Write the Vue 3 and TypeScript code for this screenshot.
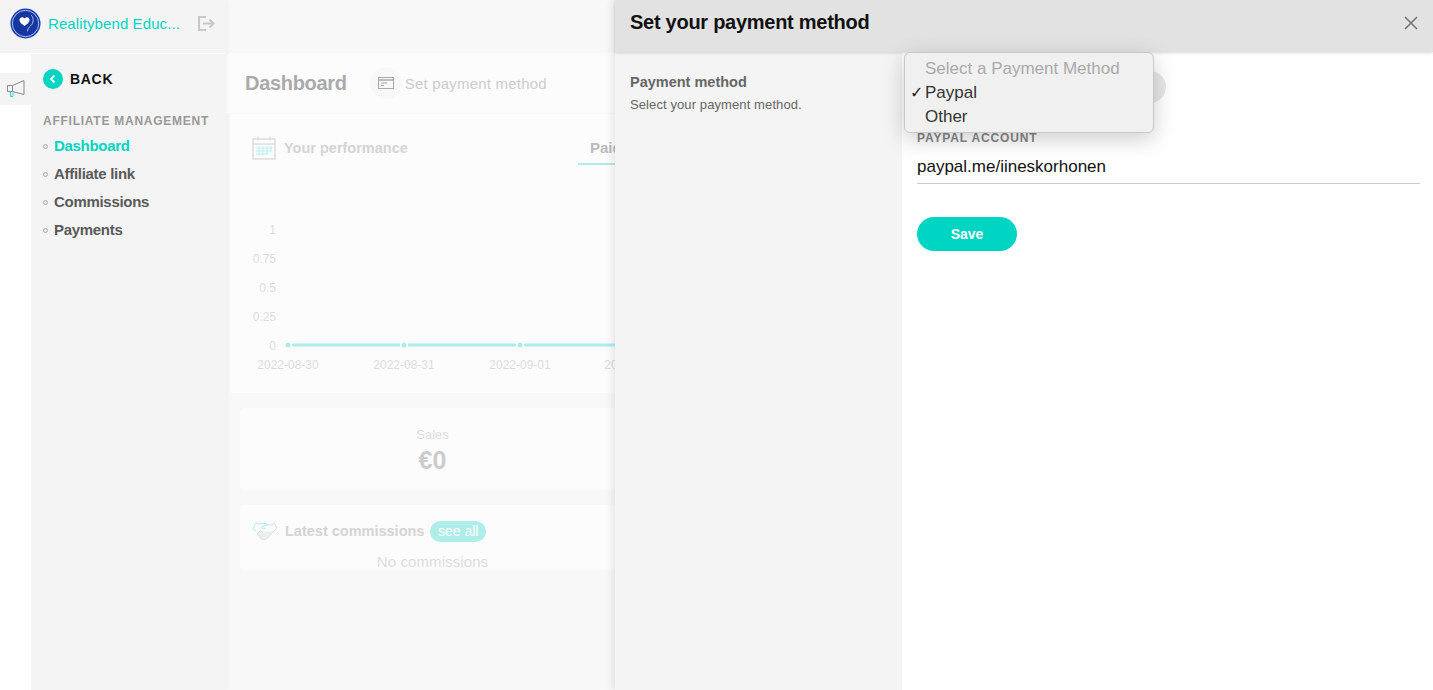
<script setup lang="ts">
const menu = [
  { label: 'Dashboard', active: true },
  { label: 'Affiliate link', active: false },
  { label: 'Commissions', active: false },
  { label: 'Payments', active: false },
]

const yTicks = ['1', '0.75', '0.5', '0.25', '0']

const xTicks = [
  { x: 58, label: '2022-08-30' },
  { x: 174, label: '2022-08-31' },
  { x: 290, label: '2022-09-01' },
  { x: 405, label: '2022-09-02' },
]

const options = [
  { label: 'Select a Payment Method', muted: true, checked: false },
  { label: 'Paypal', muted: false, checked: true },
  { label: 'Other', muted: false, checked: false },
]
</script>

<template>
  <div class="app">
    <aside class="sidebar">
      <div class="brand">
        <svg class="logo" viewBox="0 0 32 32" width="31" height="31">
          <circle cx="16" cy="16" r="15.5" fill="#1b3fb2" />
          <circle cx="16" cy="16" r="13.600" fill="none" stroke="#c5d2f2" stroke-width="0.900" />
          <circle cx="16" cy="16" r="12.400" fill="#15379f" />
          <path d="M15 18.500c-2.800-1.800-5.200-3.500-5.200-6.100 0-1.700 1.300-2.900 2.800-2.900 1 0 1.900.6 2.400 1.400.6-.8 1.400-1.400 2.400-1.400 1.500 0 2.800 1.200 2.800 2.900 0 2.600-2.400 4.300-5.200 6.100z" fill="#fff" />
          <path d="M22 7.500c2.500 2.500 2.500 6.500.5 9.500-1.500 2.200-4.200 3-4.500 7" fill="none" stroke="#c9d5f5" stroke-width="0.900" />
        </svg>
        <span class="brand-name">Realitybend Educ...</span>
        <svg class="exit" viewBox="0 0 18 15" width="18" height="15">
          <path d="M8 1H1v13h7" fill="none" stroke="#c8c8c8" stroke-width="2" />
          <path d="M5 7.500h10M11.500 3.500l4 4-4 4" fill="none" stroke="#c8c8c8" stroke-width="2" />
        </svg>
      </div>
      <div class="side-body">
        <div class="rail">
          <div class="rail-tab">
            <svg viewBox="0 0 20 20" width="20" height="20">
              <path d="M1.500 6.500h5L18 1.500v14L6.500 12.500h-5z" fill="none" stroke="#8a8a8a" stroke-width="1" />
              <path d="M6.500 6.500v6" fill="none" stroke="#8a8a8a" stroke-width="1" />
              <path d="M4.500 13v4.500h2.500V13.200" fill="none" stroke="#35d3c8" stroke-width="1" />
            </svg>
          </div>
        </div>
        <nav class="panel">
          <div class="back">
            <span class="back-dot">
              <svg viewBox="0 0 10 10" width="10" height="10">
                <path d="M6.500 1.500 3 5l3.500 3.500" fill="none" stroke="#fff" stroke-width="1.800" />
              </svg>
            </span>
            BACK
          </div>
          <div class="section-title">AFFILIATE MANAGEMENT</div>
          <ul class="menu">
            <li v-for="item in menu" :key="item.label" :class="{ active: item.active }">{{ item.label }}</li>
          </ul>
        </nav>
      </div>
    </aside>

    <main class="main">
      <div class="main-top"></div>
      <div class="title-bar">
        <h1>Dashboard</h1>
        <span class="circle">
          <svg viewBox="0 0 16 12" width="16" height="12">
            <rect x="0.500" y="0.500" width="15" height="11" fill="none" stroke="#aaa" />
            <path d="M0 3h16" stroke="#aaa" stroke-width="1.500" />
            <path d="M3 6h6M3 8.500h3" stroke="#aaa" />
          </svg>
        </span>
        <span class="pay-link">Set payment method</span>
      </div>

      <section class="perf">
        <div class="perf-head">
          <svg class="cal" viewBox="0 0 24 24" width="24" height="24">
            <rect x="1" y="3" width="22" height="20" fill="none" stroke="#ddd" stroke-width="1.500" />
            <path d="M1 8h22M6 0.500v4M18 0.500v4" stroke="#ddd" stroke-width="1.500" />
            <path d="M4 12h16M4 15h15M4 18h12M7 10v10M11 10v10M15 10v9M19 10v6" stroke="#aeeee8" stroke-width="0.800" />
          </svg>
          <span class="perf-title">Your performance</span>
          <span class="tab">Paid</span>
        </div>
        <svg class="chart" width="385" height="229" viewBox="0 0 385 229">
          <text v-for="(t, i) in yTicks" :key="t" x="46" :y="70 + i * 29" text-anchor="end" class="tick">{{ t }}</text>
          <line x1="62" y1="181" x2="170" y2="181" class="series" />
          <line x1="178" y1="181" x2="286" y2="181" class="series" />
          <line x1="294" y1="181" x2="385" y2="181" class="series" />
          <circle v-for="t in xTicks" :key="t.x" :cx="t.x" cy="181" r="2.500" fill="#aeeee8" />
          <text v-for="t in xTicks" :key="t.label" :x="t.x" y="205" text-anchor="middle" class="tick">{{ t.label }}</text>
        </svg>
      </section>

      <section class="card sales">
        <div class="sales-label">Sales</div>
        <div class="sales-value">€0</div>
      </section>

      <section class="card commissions">
        <div class="comm-head">
          <svg viewBox="0 0 26 19" width="26" height="19">
            <path d="M1 7 4 1l3 1 6-.500 3 1-6 2.500c-1 .800 0 2 1.500 1.500L14 6" fill="none" stroke="#aeeee8" stroke-width="1" />
            <path d="M1 7l3 2" fill="none" stroke="#aeeee8" stroke-width="1" />
            <path d="m16 3 4 0 2-2 3 5-3 3" fill="none" stroke="#ddd" stroke-width="1" />
            <path d="M22 9l-7 7.500c-2 1.500-4 1.500-6 0L5 12l3-3 3 1" fill="#eee" stroke="#ddd" stroke-width="1" />
          </svg>
          <span class="comm-title">Latest commissions</span>
          <span class="see-all">see all</span>
        </div>
        <div class="no-comm">No commissions</div>
      </section>
    </main>

    <div class="drawer">
      <header class="drawer-head">
        <h2>Set your payment method</h2>
        <svg class="close" viewBox="0 0 14 14" width="14" height="14">
          <path d="m1 1 12 12M13 1 1 13" stroke="#757575" stroke-width="1.600" />
        </svg>
      </header>
      <div class="drawer-body">
        <div class="drawer-side">
          <div class="side-title">Payment method</div>
          <div class="side-sub">Select your payment method.</div>
        </div>
        <form class="drawer-form" @submit.prevent>
          <div class="select-pill"></div>
          <label class="field-label">PAYPAL ACCOUNT</label>
          <div class="field-value">paypal.me/iineskorhonen</div>
          <button class="save" type="submit">Save</button>
        </form>
      </div>
      <ul class="native-menu">
        <li v-for="opt in options" :key="opt.label" :class="{ muted: opt.muted }">
          <span class="check">{{ opt.checked ? '✓' : '' }}</span>{{ opt.label }}
        </li>
      </ul>
    </div>
  </div>
</template>

<style>
html, body {
  margin: 0;
  background: #f8f8f8;
}
</style>

<style scoped>
.app {
  position: relative;
  display: flex;
  width: 1433px;
  height: 690px;
  overflow: hidden;
  font-family: "Liberation Sans", Arial, sans-serif;
  background: #f8f8f8;
}

.sidebar {
  width: 226px;
  flex-shrink: 0;
  display: flex;
  flex-direction: column;
  background: #fff;
  box-shadow: 2px 0 4px rgba(0,0,0,0.03);
  z-index: 1;
}

.brand {
  height: 47px;
  display: flex;
  align-items: center;
  padding: 0 0 6px 10px;
  background: #f4f4f4;
  border-bottom: 1px solid #fff;
}

.logo {
  flex-shrink: 0;
}

.brand-name {
  margin-left: 7px;
  width: 150px;
  font-size: 15px;
  letter-spacing: 0.1px;
  color: #00d5c4;
  white-space: nowrap;
}

.side-body {
  flex: 1;
  display: flex;
}

.rail {
  width: 31px;
  padding-top: 19px;
}

.rail-tab {
  height: 32px;
  background: #f4f4f4;
  display: flex;
  align-items: center;
  justify-content: center;
}

.panel {
  flex: 1;
  background: #f4f4f4;
  padding: 15px 0 0 12px;
}

.back {
  display: flex;
  align-items: center;
  gap: 7px;
  height: 20px;
  font-size: 14px;
  font-weight: 700;
  letter-spacing: 0.7px;
  color: #111;
}

.back-dot {
  width: 20px;
  height: 20px;
  border-radius: 50%;
  background: #00d5c4;
  display: flex;
  align-items: center;
  justify-content: center;
}

.section-title {
  margin-top: 25px;
  font-size: 12px;
  font-weight: 700;
  letter-spacing: 0.75px;
  color: #999;
}

.menu {
  list-style: none;
  margin: 4px 0 0;
  padding: 0;
}

.menu li {
  position: relative;
  height: 28px;
  line-height: 28px;
  padding-left: 11px;
  font-size: 15px;
  font-weight: 700;
  color: #5a5a5a;
  letter-spacing: -0.3px;
}

.menu li::before {
  content: "";
  position: absolute;
  left: 0;
  top: 12px;
  width: 3px;
  height: 3px;
  border: 1px solid #aaa;
  border-radius: 50%;
}

.menu li.active {
  color: #00d5c4;
}

.main {
  flex: 1;
  min-width: 0;
  display: flex;
  flex-direction: column;
}

.main-top {
  height: 53px;
  flex-shrink: 0;
}

.title-bar {
  height: 60px;
  flex-shrink: 0;
  display: flex;
  align-items: center;
  padding: 0 0 0 19px;
  background: #fcfcfc;
}

.title-bar h1 {
  margin: 0;
  font-size: 20px;
  font-weight: 700;
  letter-spacing: -0.3px;
  color: #aaa;
}

.circle {
  width: 32px;
  height: 32px;
  margin-left: 23px;
  border-radius: 50%;
  background: #f8f8f8;
  display: flex;
  align-items: center;
  justify-content: center;
}

.pay-link {
  margin-left: 3px;
  font-size: 15px;
  letter-spacing: 0.2px;
  color: #ccc;
}

.perf {
  height: 280px;
  margin-left: 4px;
  flex-shrink: 0;
  background: #fcfcfc;
  border-top: 1px solid #f8f8f8;
  box-sizing: border-box;
}

.perf-head {
  position: relative;
  display: flex;
  align-items: center;
  height: 50px;
  padding: 18px 0 0 22px;
  box-sizing: border-box;
  gap: 8px;
}

.perf-title {
  font-size: 14.500px;
  font-weight: 700;
  color: #d4d4d4;
}

.tab {
  position: absolute;
  left: 348px;
  top: 0;
  width: 60px;
  height: 51px;
  padding: 25px 0 0 12px;
  box-sizing: border-box;
  border-bottom: 2px solid #aeeee8;
  font-size: 15px;
  font-weight: 700;
  color: #bbb;
}

.chart {
  display: block;
  width: 385px;
  height: 229px;
  overflow: hidden;
}

.tick {
  font-size: 12px;
  fill: #dcdcdc;
  font-family: "Liberation Sans", Arial, sans-serif;
}

.series {
  stroke: #aeeee8;
  stroke-width: 3;
}

.card {
  flex-shrink: 0;
  margin-left: 14px;
  background: #fcfcfc;
  border-radius: 4px;
}

.sales {
  margin-top: 15px;
  width: 385px;
  height: 82px;
  text-align: center;
  padding-top: 19px;
  box-sizing: border-box;
}

.sales-label {
  font-size: 13px;
  color: #dcdcdc;
}

.sales-value {
  margin-top: 4px;
  font-size: 25px;
  font-weight: 700;
  color: #ccc;
}

.commissions {
  margin-top: 15px;
  height: 65px;
  overflow: hidden;
}

.comm-head {
  display: flex;
  align-items: center;
  height: 20px;
  padding: 16px 0 0 12px;
}

.comm-title {
  margin-left: 7px;
  font-size: 14.500px;
  font-weight: 700;
  color: #d4d4d4;
}

.see-all {
  margin-left: 6px;
  height: 21px;
  line-height: 20px;
  padding: 0 7.500px;
  border-radius: 11px;
  background: #aeeee8;
  color: #fff;
  font-size: 14px;
}

.no-comm {
  width: 385px;
  margin-top: 12px;
  text-align: center;
  font-size: 15px;
  letter-spacing: 0.1px;
  color: #dcdcdc;
}

.drawer {
  position: absolute;
  top: 0;
  right: 0;
  bottom: 0;
  width: 818px;
  display: flex;
  flex-direction: column;
  background: #fff;
  box-shadow: -3px 0 8px rgba(0,0,0,0.09);
  z-index: 2;
}

.drawer-head {
  height: 52px;
  flex-shrink: 0;
  display: flex;
  align-items: center;
  justify-content: space-between;
  padding: 0 15px;
  background: #e2e2e2;
  box-shadow: 0 1px 3px rgba(0,0,0,0.15);
  z-index: 1;
}

.drawer-head h2 {
  margin: 0 0 8px;
  font-size: 20px;
  font-weight: 700;
  color: #111;
  letter-spacing: -0.27px;
}

.close {
  margin: 0 0 6px;
}

.drawer-body {
  flex: 1;
  display: flex;
}

.drawer-side {
  width: 287px;
  flex-shrink: 0;
  padding: 22px 0 0 15px;
  box-sizing: border-box;
  background: #f4f4f4;
}

.side-title {
  font-size: 14.500px;
  font-weight: 700;
  color: #666;
}

.side-sub {
  margin-top: 7px;
  font-size: 13px;
  letter-spacing: 0.1px;
  color: #666;
}

.drawer-form {
  flex: 1;
  padding: 19px 13px 0 15px;
}

.select-pill {
  width: 249px;
  height: 32px;
  border-radius: 16px;
  background: #e8e8e8;
}

.field-label {
  display: block;
  margin-top: 28px;
  font-size: 12px;
  font-weight: 700;
  letter-spacing: 0.85px;
  color: #888;
}

.field-value {
  height: 28px;
  line-height: 24px;
  padding-top: 10px;
  border-bottom: 1px solid #ccc;
  font-size: 17px;
  color: #111;
}

.save {
  display: block;
  width: 100px;
  height: 34px;
  margin-top: 33px;
  border: none;
  border-radius: 17px;
  background: #00d5c4;
  color: #fff;
  font-family: inherit;
  font-size: 14px;
  font-weight: 700;
}

.native-menu {
  position: absolute;
  left: 289px;
  top: 52px;
  width: 250px;
  height: 81px;
  margin: 0;
  padding: 4px 0 0;
  box-sizing: border-box;
  list-style: none;
  background: #f0f0f0;
  border: 1px solid #c8c8c8;
  border-radius: 6px;
  box-shadow: 0 6px 22px rgba(0,0,0,0.2);
  z-index: 3;
  font-size: 17px;
  color: #333;
}

.native-menu li {
  display: flex;
  height: 24px;
  line-height: 24px;
}

.native-menu li.muted {
  color: #aaa;
}

.check {
  width: 20px;
  padding-left: 5px;
  box-sizing: border-box;
  font-family: "DejaVu Sans", sans-serif;
  font-size: 16px;
  font-weight: 700;
  color: #222;
}
</style>
